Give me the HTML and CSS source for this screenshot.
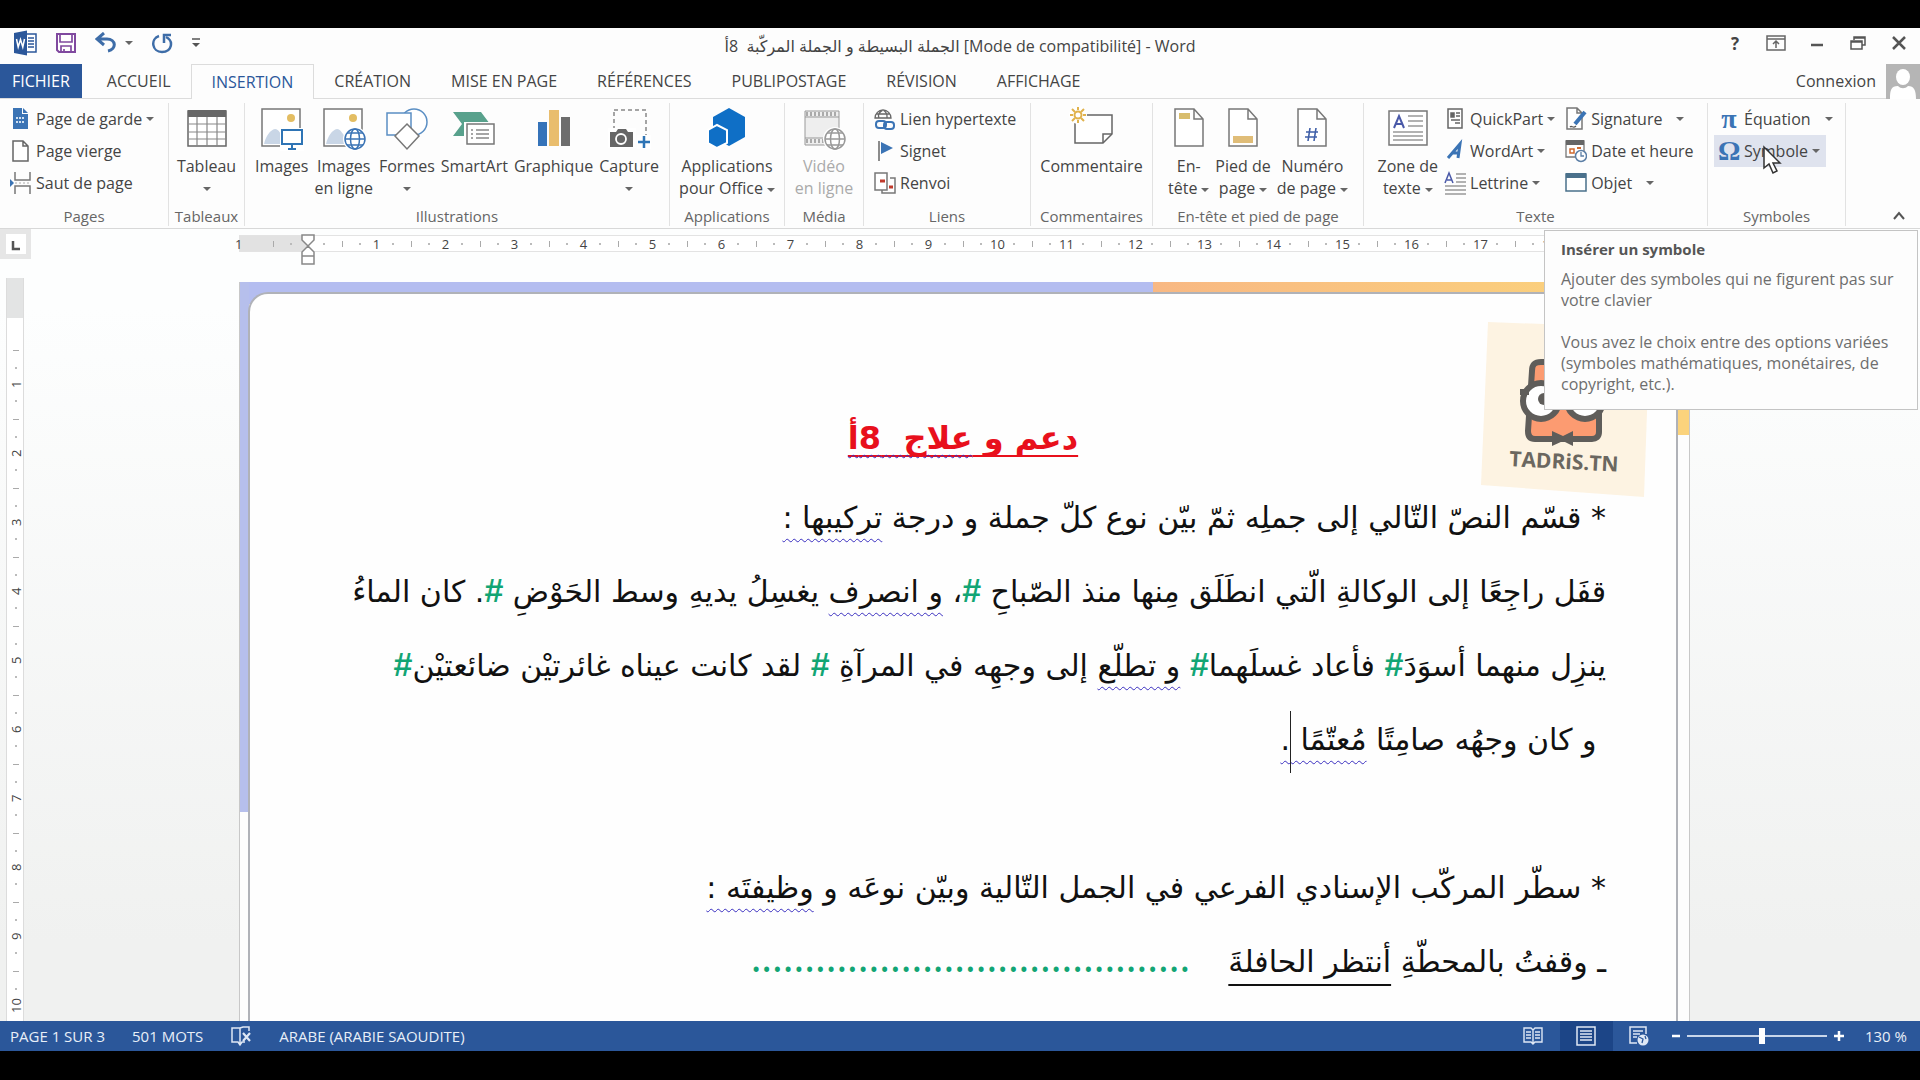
FILE: index.html
```html
<!DOCTYPE html>
<html lang="fr">
<head>
  <meta charset="UTF-8">
  <title>Word</title>
  <link rel="stylesheet" href="styles.css">
</head>
<body>
  <div class="app">
    <header class="titlebar">
      <div class="quick">
        <svg class="logo" width="24" height="26" viewBox="0 0 24 26"><rect x="10" y="4" width="13" height="18" fill="#fff" stroke="#2b579a" stroke-width="1.5"/><path d="M15 8h6M15 11h6M15 14h6M15 17h6" stroke="#2b579a" stroke-width="1.4"/><path d="M1 3l13-2.500v25L1 23z" fill="#2b579a"/><path d="M3.500 9l1.700 8L7.500 9.500 9.800 17 11.500 9" fill="none" stroke="#fff" stroke-width="1.500"/></svg>
        <button aria-label="Enregistrer"><svg width="22" height="22" viewBox="0 0 22 22"><path d="M2 2h18v18H4l-2-2z" fill="#fff" stroke="#80499f" stroke-width="2"/><path d="M5 2v8h12V2M6 20v-6h10v6M9 20v-3" fill="none" stroke="#80499f" stroke-width="1.700"/></svg></button>
        <button aria-label="Annuler" class="undo"><svg width="22" height="22" viewBox="0 0 22 22"><path d="M9 1L2 7l7 6M3 7h9c9 0 10 10 1 12" fill="none" stroke="#3e6da8" stroke-width="3"/></svg><i class="caret"></i></button>
        <button aria-label="Répéter"><svg width="22" height="22" viewBox="0 0 22 22"><path d="M8 4C-1 7 1 20 11 20s12-11 4-15" fill="none" stroke="#3e6da8" stroke-width="2.500"/><path d="M13 11V3h7" fill="none" stroke="#3e6da8" stroke-width="2.500"/></svg></button>
        <button aria-label="Personnaliser"><svg width="10" height="12" viewBox="0 0 10 12"><path d="M1 2h8" stroke="#555" stroke-width="1.500"/><path d="M1 6h8l-4 4z" fill="#555"/></svg></button>
      </div>
      <div class="doc-name">الجملة البسيطة و الجملة المركّبة &nbsp;8أ [Mode de compatibilité] - Word</div>
      <div class="window-buttons">
        <button class="help">?</button>
        <button aria-label="Options du ruban"><svg width="20" height="16" viewBox="0 0 20 16"><path d="M1 1h18v14H1zM1 4h18M10 13V7M7 9l3-3 3 3" fill="none" stroke="#666" stroke-width="1.500"/></svg></button>
        <button aria-label="Réduire"><svg width="20" height="16" viewBox="0 0 20 16"><path d="M4 10h12" stroke="#555" stroke-width="2.500"/></svg></button>
        <button aria-label="Restaurer"><svg width="20" height="16" viewBox="0 0 20 16"><path d="M6 5V2h11v8h-3M6 3h11" fill="none" stroke="#555" stroke-width="1.500"/><path d="M3 6h11v8H3zM3 7h11" fill="none" stroke="#555" stroke-width="1.500"/></svg></button>
        <button aria-label="Fermer"><svg width="20" height="16" viewBox="0 0 20 16"><path d="M4 2l12 12M16 2L4 14" stroke="#555" stroke-width="2.500"/></svg></button>
      </div>
    </header>

    <nav class="tabs">
      <button class="file">FICHIER</button>
      <button>ACCUEIL</button>
      <button class="active">INSERTION</button>
      <button>CRÉATION</button>
      <button>MISE EN PAGE</button>
      <button>RÉFÉRENCES</button>
      <button>PUBLIPOSTAGE</button>
      <button>RÉVISION</button>
      <button>AFFICHAGE</button>
      <a class="signin" href="#">Connexion
        <svg width="34" height="35" viewBox="0 0 34 35"><path d="M0 0h34v35H0z" fill="#b5b5b5"/><ellipse cx="17" cy="13" rx="7" ry="8" fill="#fff"/><path d="M4 35c0-9 1-13 8-13 3 3 7 3 10 0 6 0 8 4 8 13z" fill="#fff"/></svg></a>
    </nav>

    <div class="ribbon">
      <section class="group">
        <div class="tools">
          <div class="rows">
            <button><svg width="22" height="24" viewBox="0 0 22 24"><path d="M3 1h9v6h6v15H3z" fill="#3b74b5"/><path d="M13 1l5 5h-5z" fill="#3b74b5"/><path d="M6 11h9M6 15h9" stroke="#cfe0f2" stroke-width="2" stroke-dasharray="2 1"/></svg>Page de garde<i class="caret"></i></button>
            <button><svg width="22" height="24" viewBox="0 0 22 24"><path d="M3 2h10l5 5v15H3zM13 2v5h5" fill="#fff" stroke="#666" stroke-width="1.500"/></svg>Page vierge</button>
            <button><svg width="22" height="24" viewBox="0 0 22 24"><path d="M5 1v8h15V1M5 23v-8h15v8" fill="none" stroke="#777" stroke-width="1.500"/><path d="M0 8l4 4-4 4z" fill="#3b74b5"/><path d="M5 12h15" stroke="#aaa" stroke-dasharray="2 2"/></svg>Saut de page</button>
          </div>
        </div>
        <h2>Pages</h2>
      </section>

      <section class="group">
        <div class="tools">
          <button class="big"><svg width="42" height="42" viewBox="0 0 42 42"><path d="M2 3h38v35H2z" fill="#fff" stroke="#666" stroke-width="1.500"/><path d="M2 2h38v7H2z" fill="#666"/><path d="M2 16h38M2 24h38M2 31h38M11 9v29M21 9v29M31 9v29" stroke="#888" stroke-width="1.200"/></svg>Tableau<i class="caret"></i></button>
        </div>
        <h2>Tableaux</h2>
      </section>

      <section class="group">
        <div class="tools">
          <button class="big"><svg width="44" height="44" viewBox="0 0 44 44"><path d="M2 2h38v37H2z" fill="#fff" stroke="#777" stroke-width="1.500"/><path d="M4 37c2-8 6-14 11-15 4 0 6 6 9 9v6z" fill="#c9d6e6"/><circle cx="31" cy="11" r="4" fill="#e3bd62"/><path d="M20 21h24v23H20z" fill="#fff"/><path d="M22 23h20v14H22z" fill="#fff" stroke="#2e74b5" stroke-width="2"/><path d="M32 37v5M28 42h8" stroke="#2e74b5" stroke-width="2"/></svg>Images</button>
          <button class="big"><svg width="44" height="44" viewBox="0 0 44 44"><path d="M2 2h38v37H2z" fill="#fff" stroke="#777" stroke-width="1.500"/><path d="M4 37c2-8 6-14 11-15 4 0 6 6 9 9v6z" fill="#c9d6e6"/><circle cx="31" cy="11" r="4" fill="#e3bd62"/><circle cx="33" cy="32" r="12" fill="#fff"/><g fill="none" stroke="#3b74b5" stroke-width="1.500"><circle cx="33" cy="32" r="10"/><ellipse cx="33" cy="32" rx="4.500" ry="10"/><path d="M23 32h20M25 26h16M25 38h16"/></g></svg>Images<span>en ligne</span></button>
          <button class="big"><svg width="44" height="44" viewBox="0 0 44 44"><g fill="#fff" stroke="#5b8fc4" stroke-width="1.500"><circle cx="29" cy="15" r="13"/><path d="M2 6h24v22H2z"/><path d="M22 17l12 12-12 13-12-13z" stroke="#777"/></g></svg>Formes<i class="caret"></i></button>
          <button class="big"><svg width="44" height="44" viewBox="0 0 44 44"><path d="M1 5h28l9 12-9 12H1l9-12z" fill="#58a18c"/><path d="M12 15h32v24H12z" fill="#fff"/><path d="M15 17h27v20H15z" fill="#fff" stroke="#777" stroke-width="1.500"/><path d="M19 23h2M19 27h2M19 31h2M24 23h13M24 27h13M24 31h13" stroke="#888" stroke-width="1.300"/></svg>SmartArt</button>
          <button class="big"><svg width="44" height="44" viewBox="0 0 44 44"><path d="M6 15h9v24H6z" fill="#3573b9"/><path d="M17 3h10v36H17z" fill="#e9bd6d"/><path d="M29 10h9v29h-9z" fill="#6d6d6d"/></svg>Graphique</button>
          <button class="big"><svg width="44" height="44" viewBox="0 0 44 44"><path d="M7 3h32v34H7z" fill="none" stroke="#888" stroke-width="1.500" stroke-dasharray="4 3"/><path d="M1 21h28v20H1z" fill="#fff"/><path d="M3 25h6l2-3h8l2 3h5v15H3z" fill="#666"/><circle cx="14" cy="32" r="5" fill="#666" stroke="#fff" stroke-width="1.800"/><path d="M30 28h14v14H30z" fill="#fff"/><path d="M37 29v12M31 35h12" stroke="#2e74b5" stroke-width="2.500"/></svg>Capture<i class="caret"></i></button>
        </div>
        <h2>Illustrations</h2>
      </section>

      <section class="group">
        <div class="tools">
          <button class="big"><svg width="40" height="44" viewBox="0 0 40 44"><path d="M22 1l16 9v20l-16 9-16-9V10z" fill="#0f6fc6"/><path d="M10 18l10 5v13l-10 5-9-5V23z" fill="#0f6fc6" stroke="#fff" stroke-width="2"/></svg>Applications<span>pour Office<i class="caret"></i></span></button>
        </div>
        <h2>Applications</h2>
      </section>

      <section class="group">
        <div class="tools">
          <button class="big" disabled><svg width="44" height="44" viewBox="0 0 44 44"><path d="M3 4h34v34H3z" fill="#eee" stroke="#999"/><path d="M4 7h32M4 34h32" stroke="#aaa" stroke-width="4" stroke-dasharray="2 2"/><path d="M3 10h34M3 31h34" stroke="#999"/><circle cx="33" cy="32" r="12" fill="#fff"/><g fill="none" stroke="#999" stroke-width="1.500"><circle cx="33" cy="32" r="10"/><ellipse cx="33" cy="32" rx="4.500" ry="10"/><path d="M23 32h20M25 26h16M25 38h16"/></g></svg>Vidéo<span>en ligne</span></button>
        </div>
        <h2>Média</h2>
      </section>

      <section class="group">
        <div class="tools">
          <div class="rows">
            <button><svg width="22" height="24" viewBox="0 0 22 24"><g fill="none" stroke="#666" stroke-width="1.300"><path d="M1 11a8 8 0 0 1 16 0zM9 3c-5 3-5 6-4 8M9 3c5 3 4 6 4 8M2 7h14"/></g><g fill="none" stroke="#3b74b5" stroke-width="2"><rect x="2" y="14" width="10" height="7" rx="3"/><rect x="10" y="15" width="10" height="7" rx="3"/></g></svg>Lien hypertexte</button>
            <button><svg width="22" height="24" viewBox="0 0 22 24"><path d="M5 2v20" stroke="#666" stroke-width="1.500"/><path d="M7 3l12 6-12 6z" fill="#3b74b5"/></svg>Signet</button>
            <button><svg width="22" height="24" viewBox="0 0 22 24"><path d="M1 2h12v17H1z" fill="#fff" stroke="#777" stroke-width="1.500"/><path d="M16 7h5v15H8v-3" fill="none" stroke="#777" stroke-width="1.500"/><path d="M6 10h5M15 16h4" stroke="#c0392b" stroke-width="3"/></svg>Renvoi</button>
          </div>
        </div>
        <h2>Liens</h2>
      </section>

      <section class="group">
        <div class="tools">
          <button class="big"><svg width="46" height="44" viewBox="0 0 46 44"><path d="M6 8h37v19l-9 9H6z" fill="#fff" stroke="#666" stroke-width="1.500"/><path d="M34 36v-9h9" fill="none" stroke="#666" stroke-width="1.500"/><circle cx="9" cy="8" r="9" fill="#fff"/><circle cx="9" cy="8" r="3.500" fill="none" stroke="#e0b24c" stroke-width="2"/><path d="M9 0v3M9 13v3M1 8h3M14 8h3M3 2l3 3M12 11l3 3M15 2l-3 3M6 11l-3 3" stroke="#e0b24c" stroke-width="2"/></svg>Commentaire</button>
        </div>
        <h2>Commentaires</h2>
      </section>

      <section class="group">
        <div class="tools">
          <button class="big"><svg width="32" height="44" viewBox="0 0 32 44"><path d="M2 2h19l9 10v27H2zM21 2v10h9" fill="#fff" stroke="#777" stroke-width="1.500"/><path d="M6 6h11v6H6z" fill="#d8bd6d"/></svg>En-<span>tête<i class="caret"></i></span></button>
          <button class="big"><svg width="32" height="44" viewBox="0 0 32 44"><path d="M2 2h19l9 10v27H2zM21 2v10h9" fill="#fff" stroke="#777" stroke-width="1.500"/><path d="M6 29h20v7H6z" fill="#e0bd78"/></svg>Pied de<span>page<i class="caret"></i></span></button>
          <button class="big"><svg width="32" height="44" viewBox="0 0 32 44"><path d="M2 2h19l9 10v27H2zM21 2v10h9" fill="#fff" stroke="#777" stroke-width="1.500"/><path d="M14 21l-2 13M20 21l-2 13M10 25h12M9 30h12" stroke="#3f5fa8" stroke-width="1.600"/></svg>Numéro<span>de page<i class="caret"></i></span></button>
        </div>
        <h2>En-tête et pied de page</h2>
      </section>

      <section class="group">
        <div class="tools">
          <button class="big"><svg width="42" height="42" viewBox="0 0 42 42"><path d="M2 3h38v34H2z" fill="#fff" stroke="#777" stroke-width="1.500"/><path d="M7 20l5-12 5 12M9 16h6" fill="none" stroke="#4a59a8" stroke-width="2"/><path d="M21 8h15M21 13h15M21 18h15M6 24h30M6 28h30M6 32h30" stroke="#999" stroke-width="1.300"/></svg>Zone de<span>texte<i class="caret"></i></span></button>
          <div class="rows">
            <button><svg width="22" height="24" viewBox="0 0 22 24"><path d="M4 2h14v19H4z" fill="#fff" stroke="#666" stroke-width="1.500"/><path d="M7 6h3v4H7zM12 6h4M12 9h4M7 13h9M11 16h5" fill="#666" stroke="#666" stroke-width="1.500"/></svg>QuickPart<i class="caret"></i></button>
            <button><svg width="22" height="24" viewBox="0 0 22 24"><path d="M4 19L16 5l-2 14M8 14h8" fill="none" stroke="#3b74b5" stroke-width="3"/></svg>WordArt<i class="caret"></i></button>
            <button><svg width="22" height="24" viewBox="0 0 22 24"><path d="M1 12L5 2l4 10M3 9h5" fill="none" stroke="#4a59a8" stroke-width="1.500"/><path d="M12 3h10M12 7h10M12 11h10M1 15h21M1 19h21M1 23h21" stroke="#999" stroke-width="1.300"/></svg>Lettrine<i class="caret"></i></button>
          </div>
          <div class="rows">
            <button><svg width="22" height="24" viewBox="0 0 22 24"><path d="M2 1h10l5 5v16H2zM12 1v5h5" fill="#fff" stroke="#777" stroke-width="1.500"/><path d="M20 5L10 17" stroke="#3b74b5" stroke-width="4"/><path d="M5 20c2-2 3 2 6-1" fill="none" stroke="#555" stroke-width="1.300"/></svg>Signature<i class="caret far"></i></button>
            <button><svg width="22" height="24" viewBox="0 0 22 24"><path d="M1 2h18v16H1z" fill="#fff" stroke="#777" stroke-width="1.300"/><path d="M1 1h18v5H1z" fill="#666"/><path d="M5 10h4v4H5z" fill="none" stroke="#cf6a2f" stroke-width="1.500"/><path d="M12 9h4" stroke="#cf6a2f" stroke-width="2"/><circle cx="16" cy="17" r="5.500" fill="#fff" stroke="#5c7fa6" stroke-width="1.500"/><path d="M16 13v4h3" fill="none" stroke="#5c7fa6" stroke-width="1.300"/></svg>Date et heure</button>
            <button><svg width="22" height="24" viewBox="0 0 22 24"><path d="M1 3h20v17H1z" fill="#fff" stroke="#4a708b" stroke-width="1.500"/><path d="M1 2h20v5H1z" fill="#4a708b"/></svg>Objet<i class="caret far"></i></button>
          </div>
        </div>
        <h2>Texte</h2>
      </section>

      <section class="group">
        <div class="tools">
          <div class="rows">
            <button><b class="glyph">π</b>Équation<i class="caret far"></i></button>
            <button class="hover"><b class="glyph">Ω</b>Symbole<i class="caret"></i></button>
          </div>
        </div>
        <h2>Symboles</h2>
        <svg class="pointer" width="20" height="30" viewBox="0 0 20 30"><path d="M2 2v21l5-4 4 9 4-2-4-8h7z" fill="#fff" stroke="#333" stroke-width="1.500"/></svg>
        <div class="tooltip" role="tooltip">
          <strong>Insérer un symbole</strong>
          <p>Ajouter des symboles qui ne figurent pas sur votre clavier</p>
          <p>Vous avez le choix entre des options variées (symboles mathématiques, monétaires, de copyright, etc.).</p>
        </div>
      </section>

      <button class="collapse" aria-label="Réduire le ruban"><svg width="12" height="10" viewBox="0 0 12 10"><path d="M1 8l5-6 5 6" fill="none" stroke="#555" stroke-width="2"/></svg></button>
    </div>

    <div class="workspace">
      <aside class="side">
        <button class="tab-stop" aria-label="Tabulation"><svg width="20" height="20" viewBox="0 0 20 20"><path d="M0 0h20v20H0z" fill="#fff"/><path d="M7 7v8h7" fill="none" stroke="#555" stroke-width="2.500"/></svg></button>
        <div class="vruler"><i></i><span>1</span><span>2</span><span>3</span><span>4</span><span>5</span><span>6</span><span>7</span><span>8</span><span>9</span><span>10</span></div>
      </aside>
      <div class="view">
        <div class="hruler"><span class="first">1</span><span class="zero"><svg width="14" height="32" viewBox="0 0 14 32"><path d="M1 1h12v5l-6 6-6-6zM7 12l6 6v4H1v-4zM1 22h12v8H1z" fill="#fff" stroke="#888" stroke-width="1.500"/></svg></span><span>1</span><span>2</span><span>3</span><span>4</span><span>5</span><span>6</span><span>7</span><span>8</span><span>9</span><span>10</span><span>11</span><span>12</span><span>13</span><span>14</span><span>15</span><span>16</span><span>17</span><span>18</span></div>
        <main class="page">
          <article class="sheet" dir="rtl" lang="ar">
            <h1>دعم و <span class="check">علاج &nbsp;8أ</span></h1>
            <p>* قسّم النصّ التّالي إلى جملِه ثمّ بيّن نوع كلّ جملة و درجة <span class="check">تركيبها :</span></p>
            <p>قفَل راجِعًا إلى الوكالةِ الّتي انطَلَق مِنها منذ الصّباحِ <b>#</b>، <span class="check">و انصرف</span> يغسِلُ يديهِ وسط الحَوْضِ <b>#</b>. كان الماءُ</p>
            <p>ينزِل منهما أسوَدَ<b>#</b> فأعاد غسلَهما<b>#</b> <span class="check">و تطلّع</span> إلى وجهِه في المرآةِ <b>#</b> لقد كانت عيناه غائرتيْن ضائعتيْن<b>#</b></p>
            <p>&nbsp;و كان وجهُه صامِتًا <span class="check">مُعتّمًا <i class="cursor"></i>.</span></p>
            <p>&nbsp;</p>
            <p>* سطّر المركّب الإسنادي الفرعي في الجمل التّالية وبيّن نوعَه و <span class="check">وظيفتَه :</span></p>
            <p>ـ وقفتُ بالمحطّةِ <u>أنتظر الحافلةَ</u> &nbsp; &nbsp;<b class="dots">.........................................</b></p>
            <svg class="stamp" width="170" height="180" viewBox="0 0 170 180" direction="ltr"><path d="M8 5l162 6-6 169L1 168z" fill="#fdf3e2"/><path d="M52 54c0-7 3-9 9-9h48c8 0 10 4 10 10v60c0 5-3 7-7 7H55c-5 0-7-3-7-8z" fill="#fc9b71" stroke="#5f5d5a" stroke-width="6"/><circle cx="61" cy="84" r="18" fill="#fff" stroke="#5f5d5a" stroke-width="6"/><circle cx="105" cy="84" r="18" fill="#fff" stroke="#5f5d5a" stroke-width="6"/><circle cx="64" cy="82" r="6" fill="#5f5d5a"/><circle cx="106" cy="87" r="6" fill="#5f5d5a"/><path d="M40 75h9" stroke="#5f5d5a" stroke-width="6"/><path d="M72 114l11 5 10-5v15l-10-5-11 5z" fill="#5f5d5a"/><text x="29" y="149" transform="rotate(3 29 149)">TADRiS.TN</text></svg>
          </article>
        </main>
      </div>
    </div>

    <footer class="status">
      <span>PAGE 1 SUR 3</span>
      <span>501 MOTS</span>
      <svg width="22" height="22" viewBox="0 0 22 22"><path d="M10 19V3H2v14h6l2 3 2-3h3M10 3l3-1h6v4" fill="none" stroke="#dfe8f5" stroke-width="1.500"/><path d="M13 8l7 8M20 8l-7 8" stroke="#dfe8f5" stroke-width="2.200"/></svg>
      <span>ARABE (ARABIE SAOUDITE)</span>
      <div class="views">
        <button aria-label="Mode Lecture"><svg width="20" height="20" viewBox="0 0 20 20"><path d="M1 2h7l2 2 2-2h7v14h-7l-2 2-2-2H1zM10 4v14M3 6h5M3 9h5M3 12h5M12 6h5M12 9h5M12 12h5" fill="none" stroke="#dfe8f5" stroke-width="1.400"/></svg></button>
        <button aria-label="Page" class="on"><svg width="20" height="20" viewBox="0 0 20 20"><path d="M1 1h18v18H1zM4 5h12M4 8h12M4 11h12M4 14h12" fill="none" stroke="#dfe8f5" stroke-width="1.500"/></svg></button>
        <button aria-label="Web"><svg width="20" height="20" viewBox="0 0 20 20"><path d="M8 17H1V1h16v7M4 5h10M4 8h7M4 11h4" fill="none" stroke="#dfe8f5" stroke-width="1.500"/><circle cx="14" cy="14" r="5.500" fill="#dfe8f5"/><path d="M10 11l4 2-1 4M16 10l1 3" fill="none" stroke="#2b579a" stroke-width="1.300"/></svg></button>
      </div>
      <div class="zoom">
        <button aria-label="Zoom arrière"><svg width="10" height="10" viewBox="0 0 10 10"><path d="M1 5h8" stroke="#fff" stroke-width="2.500"/></svg></button>
        <input type="range" min="0" max="100" value="54" aria-label="Zoom">
        <button aria-label="Zoom avant"><svg width="12" height="12" viewBox="0 0 12 12"><path d="M1 6h10M6 1v10" stroke="#fff" stroke-width="2.500"/></svg></button>
        <span>130 %</span>
      </div>
    </footer>
  </div>
</body>
</html>
```

FILE: styles.css
```css
* {
  box-sizing: border-box;
}
body {
  margin: 0;
  padding: 28px 0 29px;
  height: 100vh;
  background: #000;
  color: #444;
  font-family: "Open Sans", "Noto Sans", "DejaVu Sans", sans-serif;
  font-size: 16px;
}
button {
  display: flex;
  align-items: center;
  padding: 0;
  border: 0;
  background: none;
  color: inherit;
  font: inherit;
  white-space: nowrap;
}
svg {
  display: block;
  flex: none;
}
.app {
  display: flex;
  flex-direction: column;
  height: 100%;
  background: #fdfdfd;
}

/* title bar */
.titlebar {
  display: grid;
  grid-template-columns: 1fr auto 1fr;
  align-items: center;
  height: 36px;
}
.quick {
  display: flex;
  align-items: center;
  gap: 18px;
  padding: 0 0 6px 13px;
}
.undo {
  gap: 4px;
}
.window-buttons {
  display: flex;
  justify-content: flex-end;
  gap: 21px;
  padding: 0 11px 6px 0;
}
.window-buttons button {
  justify-content: center;
  width: 20px;
}
.help {
  font-size: 17px;
  font-weight: bold;
}
.caret {
  display: inline-block;
  flex: none;
  margin-left: 4px;
  border: 4px solid transparent;
  border-top: 4px solid #666;
  border-bottom: 0;
  vertical-align: middle;
}

/* tabs */
.tabs {
  display: flex;
  height: 35px;
  border-bottom: 1px solid #dcdcdc;
}
.tabs button {
  padding: 0 20px;
}
.tabs .file {
  margin-right: 5px;
  padding: 0 12px;
  background: #2b579a;
  color: #fff;
}
.tabs .active {
  height: 35px;
  border: 1px solid #dcdcdc;
  border-bottom: 0;
  background: #fdfdfd;
  color: #2b579a;
}
.signin {
  display: flex;
  align-items: center;
  gap: 10px;
  margin-left: auto;
  color: inherit;
  text-decoration: none;
}

/* ribbon */
.ribbon {
  display: grid;
  grid-template-columns: 169fr 76fr 425fr 115fr 79fr 167fr 122fr 211fr 344fr 138fr 74fr;
  height: 130px;
  padding: 4px 0 2px;
  border-bottom: 1px solid #d8d8d8;
}
.group {
  position: relative;
  display: flex;
  flex-direction: column;
  justify-content: space-between;
  min-width: 0;
  border-right: 1px solid #e2e2e2;
}
.group h2 {
  margin: 0;
  color: #666;
  font-size: 15px;
  font-weight: normal;
  line-height: 20px;
  text-align: center;
  white-space: nowrap;
}
.tools {
  display: flex;
  justify-content: center;
  gap: 6px;
}
.rows {
  flex: 1;
  padding-left: 10px;
}
.rows button {
  gap: 4px;
  height: 32px;
}
.tools .big ~ .rows {
  flex: none;
}
.tools .big + .rows {
  padding: 0 4px 0 0;
}
.tools .rows + .rows {
  padding: 0;
}
.rows .caret {
  margin-left: 0;
}
.rows .caret.far {
  margin-left: 10px;
}
.big {
  flex-direction: column;
  padding-top: 4px;
  line-height: 22px;
}
.big svg {
  height: 44px;
  margin-bottom: 4px;
}
.big > .caret {
  margin: 10px 0 0;
}
.big:disabled {
  color: #aaa;
}
.glyph {
  width: 22px;
  color: #3b74b5;
  font-family: "Liberation Serif", serif;
  font-size: 28px;
  line-height: 30px;
}
.rows .hover {
  margin-left: -4px;
  padding: 0 6px 0 4px;
  background: #dfe3ee;
}
.collapse {
  justify-self: center;
  align-self: end;
  height: 20px;
  margin-left: 32px;
}
.pointer {
  position: absolute;
  top: 42px;
  left: 54px;
  z-index: 3;
}
.tooltip {
  position: absolute;
  top: 127px;
  right: -73px;
  z-index: 2;
  width: 374px;
  height: 180px;
  padding: 8px 16px 0 16px;
  border: 1px solid #c4c4c4;
  background: #fdfdfd;
  color: #6e6e6e;
  line-height: 21px;
}
.tooltip strong {
  color: #555;
  font-size: 15px;
}
.tooltip p {
  margin: 9px 0 21px;
}
.tooltip p + p {
  margin: 0;
}

/* rulers and document */
.workspace {
  display: grid;
  grid-template-columns: 239px 1fr;
  flex: 1;
  min-height: 0;
  overflow: hidden;
  background: linear-gradient(#fdfefe 10%, #f0f1f0 90%);
}
.tab-stop {
  justify-content: center;
  width: 31px;
  height: 30px;
  background: #e6e6e6;
}
.vruler {
  width: 18px;
  margin: 19px 0 0 6px;
  border: solid #dcdcdc;
  border-width: 0 1px;
  background: #fff;
  font-size: 13px;
}
.vruler i {
  display: block;
  height: 72px;
  background: linear-gradient(#e3e4e4 40px, transparent 40px);
}
.vruler span {
  display: flex;
  align-items: center;
  justify-content: center;
  height: 69px;
  writing-mode: vertical-rl;
  transform: rotate(180deg);
  background: linear-gradient(#aaa, #aaa) center bottom / 6px 1px no-repeat,
    linear-gradient(#bbb, #bbb) center 25% / 2px 2px no-repeat,
    linear-gradient(#bbb, #bbb) center 75% / 2px 2px no-repeat;
}
.view {
  min-width: 0;
}
.hruler {
  display: flex;
  height: 17px;
  margin: 6px 230px 0 0;
  border: solid #e3e3e3;
  border-width: 1px 0;
  background: linear-gradient(90deg, #e2e2e2 68px, #fff 68px);
  font-size: 13px;
}
.hruler span {
  display: flex;
  align-items: center;
  justify-content: center;
  flex: none;
  width: 69px;
  background: linear-gradient(#aaa, #aaa) left center / 1px 6px no-repeat,
    linear-gradient(#bbb, #bbb) 25% center / 2px 2px no-repeat,
    linear-gradient(#bbb, #bbb) 75% center / 2px 2px no-repeat;
}
.hruler .first {
  justify-content: flex-start;
  width: 38px;
  margin-left: -4px;
  background: none;
}
.hruler .zero svg {
  margin-top: 12px;
}
.page {
  height: 100%;
  margin: 30px 230px 0 0;
  padding: 10px 11px 0 8px;
  border: solid #c8c8c8;
  border-width: 0 1px;
  background: linear-gradient(#b6bfec, #b6bfec) left top / 9px 530px no-repeat,
    linear-gradient(#fbd37c, #fbd37c) right top / 20px 153px no-repeat,
    linear-gradient(90deg, #b4bdf0 63%, #f8b883 63%, #fbd37c 95%) top / 100% 22px no-repeat,
    #fdfdfd;
}
.sheet {
  position: relative;
  height: 100%;
  padding: 107px 70px 0;
  border: 2px solid #b0b2b8;
  border-bottom: 0;
  border-radius: 20px 20px 0 0;
  background: #fefefe;
  color: #111;
  font-family: "DejaVu Sans", sans-serif;
  font-size: 30px;
}
.sheet p,
.sheet h1 {
  margin: 0;
  line-height: 74px;
  white-space: nowrap;
}
.sheet h1 {
  margin-bottom: 6px;
  color: #e8101c;
  font-size: 32px;
  text-align: center;
  text-decoration: underline;
  text-decoration-thickness: 2px;
  text-decoration-skip-ink: none;
  text-underline-offset: 6px;
}
.check {
  text-decoration: underline wavy #3a2fc0 1px;
  text-decoration-skip-ink: none;
  text-underline-offset: 10px;
}
.sheet h1 .check {
  text-underline-offset: 5px;
}
.sheet b {
  color: #12a574;
  font-family: "Liberation Sans", sans-serif;
  font-size: 34px;
  line-height: 1;
}
.sheet .dots {
  font-family: "Noto Sans", sans-serif;
  font-size: 40px;
  font-weight: normal;
}
.sheet u {
  text-decoration-thickness: 2px;
  text-decoration-skip-ink: none;
  text-underline-offset: 12px;
}
.cursor {
  display: inline-block;
  width: 1px;
  height: 62px;
  background: #222;
  vertical-align: middle;
}
.stamp {
  position: absolute;
  top: 23px;
  right: 26px;
}
.stamp text {
  fill: #6b6760;
  font: bold 21px "Open Sans", sans-serif;
}

/* status bar */
.status {
  display: flex;
  align-items: center;
  gap: 27px;
  height: 30px;
  padding: 0 13px 0 10px;
  background: #2b579a;
  color: #e8eff8;
  font-size: 15px;
}
.views {
  display: flex;
  margin-left: auto;
}
.views button {
  justify-content: center;
  width: 53px;
  height: 30px;
}
.views .on {
  background: #1c4587;
}
.zoom {
  display: flex;
  align-items: center;
  gap: 6px;
  margin-left: -22px;
}
.zoom span {
  margin-left: 14px;
}
.zoom input {
  width: 140px;
  height: 20px;
  margin: 0;
  appearance: none;
  background: linear-gradient(#c9d6ea, #c9d6ea) center / 100% 2px no-repeat;
}
.zoom input::-webkit-slider-thumb {
  appearance: none;
  width: 6px;
  height: 16px;
  background: #fff;
}
```
